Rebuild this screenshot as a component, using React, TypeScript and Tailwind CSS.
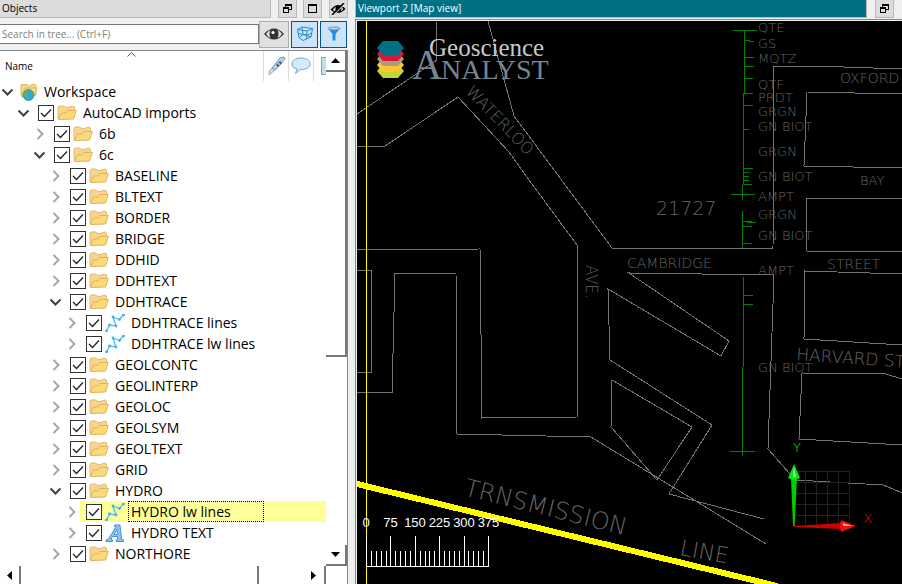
import { useState } from "react";
import type { ReactNode } from "react";

type Kind = "workspace" | "folder" | "lines" | "text";
type Node = { name: string; level: number; open?: boolean; kind: Kind; selected?: boolean };

const nodes: Node[] = [
  { name: "Workspace", level: 0, open: true, kind: "workspace" },
  { name: "AutoCAD imports", level: 1, open: true, kind: "folder" },
  { name: "6b", level: 2, kind: "folder" },
  { name: "6c", level: 2, open: true, kind: "folder" },
  { name: "BASELINE", level: 3, kind: "folder" },
  { name: "BLTEXT", level: 3, kind: "folder" },
  { name: "BORDER", level: 3, kind: "folder" },
  { name: "BRIDGE", level: 3, kind: "folder" },
  { name: "DDHID", level: 3, kind: "folder" },
  { name: "DDHTEXT", level: 3, kind: "folder" },
  { name: "DDHTRACE", level: 3, open: true, kind: "folder" },
  { name: "DDHTRACE lines", level: 4, kind: "lines" },
  { name: "DDHTRACE lw lines", level: 4, kind: "lines" },
  { name: "GEOLCONTC", level: 3, kind: "folder" },
  { name: "GEOLINTERP", level: 3, kind: "folder" },
  { name: "GEOLOC", level: 3, kind: "folder" },
  { name: "GEOLSYM", level: 3, kind: "folder" },
  { name: "GEOLTEXT", level: 3, kind: "folder" },
  { name: "GRID", level: 3, kind: "folder" },
  { name: "HYDRO", level: 3, open: true, kind: "folder" },
  { name: "HYDRO lw lines", level: 4, kind: "lines", selected: true },
  { name: "HYDRO TEXT", level: 4, kind: "text" },
  { name: "NORTHORE", level: 3, kind: "folder" },
];

const indents = ["pl-0", "pl-4", "pl-8", "pl-12", "pl-16"];

function FolderShape() {
  return (
    <>
      <path d="M1 15V3L2 2H7L8.500 3.500H11L16 2L17.500 3V6" fill="#f7d590" stroke="#e3ba6c" strokeWidth="1" />
      <path d="M1.500 15.500L4.500 9H9L10.500 6.500H19.300L16.500 15Z" fill="#fcda78" stroke="#e0b25c" strokeWidth="1" />
    </>
  );
}

function NodeIcon({ kind }: { kind: Kind }) {
  if (kind === "workspace")
    return (
      <svg className="h-[18px] w-[18px] shrink-0" viewBox="0 0 18 18" aria-hidden="true">
        <path d="M1 12V1.500H7L8.500 3L14 1L16 2.500V12L12 14H2Z" fill="#f7d58e" stroke="#e3b765" />
        <path d="M2 12L5 5H17L14 13Z" fill="#fbdc8c" stroke="#e3b765" />
        <circle cx="8.500" cy="12" r="5.500" fill="#35a2e8" />
        <path d="M5 8.500C7 5.500 9 6.500 9 8S6.500 9.500 7 11S9.500 12.500 8 14.500S5.500 13.500 4 12.500ZM11 8.500C13 9.500 13.500 10.500 13 12.500L11 13.500Z" fill="#54c03b" />
        <circle cx="8.500" cy="12" r="5.500" fill="none" stroke="#3b86c8" strokeWidth=".8" />
      </svg>
    );
  return (
    <svg className="h-[18px] w-5 shrink-0" viewBox="0 0 20 18" aria-hidden="true">
      {kind === "folder" && <FolderShape />}
      {kind === "lines" && (
        <g fill="#3fb2ea">
          <path d="M1.500 17L4.500 11L11 12L8 3L14.500 5.500L18.500 0.500" fill="none" stroke="#4fbcf0" strokeWidth="1.300" />
          {[[1.5, 17], [4.5, 11], [11, 12], [8, 3], [14.5, 5.5], [18.5, 1]].map(([x, y]) => (
            <circle key={`${x}-${y}`} cx={x} cy={y} r="1.400" />
          ))}
        </g>
      )}
      {kind === "text" && (
        <path
          d="M9.500 1H15L16.500 15L18.500 16V17.500H11V16L12.500 15.500V12.500H7.500L6 15.500L7.500 16V17.500H1V16L3 15.500L11 3L9.500 2.500ZM12 5.500L9 10.500H12.500Z"
          fillRule="evenodd"
          fill="#86c2f3"
          stroke="#4f93cd"
        />
      )}
    </svg>
  );
}

function TreeRow({ node }: { node: Node }) {
  const [checked, setChecked] = useState(true);
  const id = `node-${node.name.replace(/ /g, "-")}`;
  return (
    <li role="treeitem" aria-expanded={!!node.open} aria-selected={!!node.selected} className={`flex h-[21px] ${indents[node.level]}`}>
      <button type="button" aria-label={`Toggle ${node.name}`} className="grid w-4 shrink-0 place-items-center">
        <svg className="h-4 w-4" viewBox="0 0 16 16" fill="none" strokeWidth="2" aria-hidden="true">
          {node.open ? <path d="M2.500 5.500L7.500 10.500L12.500 5.500" stroke="#404040" /> : <path d="M5.500 3L10.500 8L5.500 13" stroke="#a6a6a6" />}
        </svg>
      </button>
      <div className={`flex min-w-0 flex-1 items-center ${node.selected ? "bg-[#ffff99]" : ""} ${node.level ? "pl-1.5" : "pl-1"}`}>
        {node.level > 0 && (
          <span className="mr-[3px] grid h-4 w-4 shrink-0">
            <input
              id={id}
              type="checkbox"
              checked={checked}
              onChange={() => setChecked(!checked)}
              className="col-start-1 row-start-1 m-0 h-4 w-4 appearance-none border border-[#333] bg-white"
            />
            {checked && (
              <svg className="pointer-events-none col-start-1 row-start-1 h-4 w-4" viewBox="0 0 16 16" aria-hidden="true">
                <path d="M3 8L6.500 11.500L13 4.500" fill="none" stroke="#222" strokeWidth="1.300" />
              </svg>
            )}
          </span>
        )}
        <NodeIcon kind={node.kind} />
        <label
          htmlFor={node.level ? id : undefined}
          className={`ml-[3px] flex h-[21px] items-center border pl-0.5 text-[14px] leading-5 whitespace-nowrap text-black ${
            node.selected ? "w-[136px] border-dotted border-black" : "border-transparent"
          }`}
        >
          {node.name}
        </label>
      </div>
    </li>
  );
}

function TitleButton({ label, children }: { label: string; children: ReactNode }) {
  return (
    <button type="button" aria-label={label} className="grid h-[18px] w-[19px] shrink-0 place-items-center border border-t-0 border-[#b9b9b9] bg-[#dcdcdc]">
      {children}
    </button>
  );
}

function RestoreIcon() {
  return (
    <svg className="h-[9px] w-[9px]" viewBox="0 0 9 9" shapeRendering="crispEdges" aria-hidden="true">
      <path d="M2 0H9V6H6V9H0V3H2ZM3 2V3H6V5H8V2ZM1 5V8H5V5Z" fillRule="evenodd" />
    </svg>
  );
}

function EyeShape() {
  return (
    <>
      <path d="M0 8Q10 -3 20 8Q10 19 0 8Z" fill="#333" />
      <path d="M2 8Q4 5 6.500 4Q4.500 8 6.500 12Q4 11 2 8ZM18 8Q16 5 13.500 4Q15.500 8 13.500 12Q16 11 18 8Z" fill="#e1e1e1" />
      <circle cx="9" cy="6.500" r="1.600" fill="#fff" />
    </>
  );
}

function ObjectsPanel() {
  return (
    <aside className="flex w-[348px] shrink-0 flex-col">
      <header className="flex h-[18px] shrink-0 justify-between">
        <h2 className="w-[271px] border-r border-b border-[#b9b9b9] bg-[#dcdcdc] pl-0.5 text-[10px] leading-[17px] text-black">Objects</h2>
        <TitleButton label="Restore"><RestoreIcon /></TitleButton>
        <TitleButton label="Maximize">
          <span className="h-[9px] w-[9px] border border-t-2 border-black" />
        </TitleButton>
        <TitleButton label="Hide">
          <svg className="h-3 w-4" viewBox="0 0 20 16" aria-hidden="true">
            <path d="M0 9Q10 -3 20 8Q10 18 0 9Z" />
            <path d="M3 9Q5 6 7 5Q6 8 7 11Q5 11 3 9ZM17 8Q16 6 14 5Q15 8 14 11Q16 10 17 8Z" fill="#dcdcdc" />
            <path d="M4 16L19 1" stroke="#dcdcdc" strokeWidth="1.500" />
            <path d="M2 16L18 0" stroke="#000" strokeWidth="2" />
          </svg>
        </TitleButton>
      </header>
      <div className="flex h-8 shrink-0 items-center gap-0.5 pr-px">
        <input
          type="text"
          aria-label="Search in tree"
          placeholder="Search in tree... (Ctrl+F)"
          className="h-5 min-w-0 flex-1 border border-l-0 border-[#777] bg-white pl-0.5 text-[10px] text-black placeholder:text-[#808080]"
        />
        <button type="button" aria-label="Show visible objects" className="-ml-0.5 grid h-[27px] w-[30px] place-items-center border border-[#adadad] bg-[#e1e1e1]">
          <svg className="h-4 w-5" viewBox="0 0 20 16" aria-hidden="true"><EyeShape /></svg>
        </button>
        <button type="button" aria-label="Box filter" className="grid h-[27px] w-[27px] place-items-center border border-[#00559b] bg-[#cce4f7]">
          <svg className="h-[18px] w-[18px]" viewBox="0 0 18 18" fill="none" stroke="#2791c4" aria-hidden="true">
            <path d="M1.500 4.500L6 2L16.500 3.500L15 12L7 15.500L3 12.500ZM1.500 4.500L11 6L16.500 3.500M11 6L10.500 14M6 2L7 9.500L3 12.500M7 9.500L15 12M2 8.500L11 10L16 8" />
          </svg>
        </button>
        <button type="button" aria-label="Filter" className="grid h-[27px] w-[27px] place-items-center border border-[#00559b] bg-[#cce4f7]">
          <svg className="h-4 w-4" viewBox="0 0 16 16" aria-hidden="true">
            <path d="M2 2.500L6.500 8V14.500H9.500V8L14 2.500Z" fill="#1b90ee" />
            <ellipse cx="8" cy="2.500" rx="6" ry="1.500" fill="#c8d2dc" stroke="#5d83a5" strokeWidth=".8" />
          </svg>
        </button>
      </div>
      <div className="flex min-h-0 flex-1 flex-col border-t border-r border-[#828790] bg-white">
        <div className="flex min-h-0 flex-1">
          <div className="flex min-w-0 flex-1 flex-col overflow-hidden">
            <div className="flex h-[30px] shrink-0 text-black">
              <div className="grid min-w-0 flex-1 grid-cols-1">
                <svg className="col-start-1 row-start-1 mt-px h-[5px] w-[9px] justify-self-center" viewBox="0 0 9 5" fill="none" stroke="#555" aria-hidden="true">
                  <path d="M.5 4.500L4.500 .5L8.500 4.500" />
                </svg>
                <span className="col-start-1 row-start-1 self-center pl-[5px] text-[10px] leading-4">Name</span>
              </div>
              <span className="grid w-[25px] place-items-center border-l border-[#dcdcdc]">
                <svg className="h-5 w-5" viewBox="0 0 20 20" aria-hidden="true">
                  <path d="M3 19V15L6 12L9 14Z" fill="#ddd" stroke="#aaa" />
                  <path d="M6 12L14 2L18 1L19 3L9 14.500Z" fill="#a9d2f3" stroke="#6c97b8" />
                  <path d="M10 9L14 5L16 7L12 11Z" fill="#556" />
                  <circle cx="13" cy="8" r="1" fill="#ddd" />
                </svg>
              </span>
              <span className="grid w-[25px] place-items-center border-l border-[#dcdcdc]">
                <svg className="h-5 w-5" viewBox="0 0 20 20" aria-hidden="true">
                  <path d="M10 2C15 2 19 4 19 8S15 13.500 9.500 13.500L4.500 17.500L6 13C3 12.500 1 11 1 8C1 4 5 2 10 2Z" fill="#d4ebfc" stroke="#72a9cc" />
                </svg>
              </span>
              <span className="flex w-[13px] items-center border-l border-[#dcdcdc] pl-[7px]">
                <span className="h-[18px] w-[5px] border border-r-0 border-[#79a8bc] bg-[#bfe0ec]" />
              </span>
            </div>
            <ul role="tree" aria-label="Objects" className="min-h-0 flex-1 overflow-hidden">
              {nodes.map((n) => <TreeRow key={n.name} node={n} />)}
            </ul>
          </div>
          <div className="flex w-[21px] shrink-0 flex-col">
            <button type="button" aria-label="Scroll up" className="grid h-[21px] shrink-0 place-items-center border-r-2 border-b-2 border-[#777]">
              <svg className="h-[5px] w-[9px]" viewBox="0 0 9 5" aria-hidden="true"><path d="M0 5L4.500 0L9 5Z" /></svg>
            </button>
            <div className="flex-[3] border-r-2 border-b-2 border-[#777]" />
            <div className="flex-[2]" />
            <button type="button" aria-label="Scroll down" className="grid h-[21px] shrink-0 place-items-center border-r-2 border-b-2 border-[#777]">
              <svg className="h-[5px] w-[9px]" viewBox="0 0 9 5" aria-hidden="true"><path d="M0 0L4.500 5L9 0Z" /></svg>
            </button>
          </div>
        </div>
        <div className="flex h-[18px] shrink-0">
          <button type="button" aria-label="Scroll left" className="grid w-[21px] place-items-center border-r-2 border-[#777]">
            <svg className="h-[9px] w-[5px]" viewBox="0 0 5 9" aria-hidden="true"><path d="M5 0L0 4.500L5 9Z" /></svg>
          </button>
          <div className="flex-1 border-r-2 border-[#777]" />
          <button type="button" aria-label="Scroll right" className="flex w-[67px] items-center justify-end border-r-2 border-[#777] pr-2">
            <svg className="h-[9px] w-[5px]" viewBox="0 0 5 9" aria-hidden="true"><path d="M0 0L5 4.500L0 9Z" /></svg>
          </button>
          <div className="w-[21px]" />
        </div>
      </div>
    </aside>
  );
}

const streets = [
  "436,21 437,60 357,114",
  "488,21 514,116 612,248 773,248 774,66 815,66 902,69",
  "357,146 385,146 458,97 509,152 529,180 577,245 577,417 482,418 480,249 357,250",
  "357,270 371,270 371,372 357,372",
  "357,392 392,393 395,273 456,273 457,434 591,437 766,544",
  "774,275 629,273 729,341 721,356 608,289 610,360 712,425 669,494 764,519",
  "774,275 768,449 790,474 795,480 883,485 893,489 902,493",
  "612,380 692,427 657,480 611,427 612,380",
  "902,94 807,92 804,166 902,168",
  "902,198 806,198 806,251 902,252",
  "902,274 805,271 804,339 902,345",
  "902,379 886,374 802,373 799,439 902,445",
];

const holes: [string, number][] = [
  ["QTE", 32], ["GS", 48], ["MQTZ", 63], ["QTF", 89], ["PRDT", 102], ["GRGN", 116], ["GN BIOT", 131],
  ["GRGN", 156], ["GN BIOT", 181], ["AMPT", 201], ["GRGN", 219], ["GN BIOT", 240], ["AMPT", 275], ["GN BIOT", 372],
];

const roads: { t: string; x: number; y: number; a: number; s: string }[] = [
  { t: "OXFORD", x: 840, y: 83, a: 0, s: "text-[14px]" },
  { t: "BAY", x: 860, y: 185, a: 0, s: "text-[13px]" },
  { t: "CAMBRIDGE", x: 627, y: 268, a: 0, s: "text-[14px]" },
  { t: "STREET", x: 827, y: 269, a: 0, s: "text-[14px]" },
  { t: "HARVARD ST", x: 796, y: 360, a: 4, s: "text-[17px]" },
  { t: "21727", x: 656, y: 215, a: 0, s: "text-[19px]" },
  { t: "AVE.", x: 586, y: 265, a: 90, s: "text-[15px]" },
  { t: "WATERLOO", x: 465, y: 92, a: 46, s: "text-[16px]" },
  { t: "TRNSMISSION", x: 463, y: 495, a: 14, s: "text-[24px]" },
  { t: "LINE", x: 679, y: 555, a: 10, s: "text-[22px]" },
];

const hexagon = "377,48 383,41 398,41 404,48 398,55 383,55";

function MapView() {
  return (
    <svg className="block h-full w-full bg-black" role="img" aria-label="Map view">
      <g transform="translate(-357 -21)">
        <g fill="none" stroke="#747474" shapeRendering="crispEdges">
          {streets.map((p) => <polyline key={p} points={p} />)}
        </g>
        <path
          fill="none"
          stroke="#008000"
          shapeRendering="crispEdges"
          d="M733 30.500H757M744.500 30V93.500M743.500 93V185M742.500 185V200M744 40.500H750M749 41.500H754M744 57.500H754M744 66.500H754M744 78.500H753M743 93.500H753M743 105.500H753M743 129.500H749M743 168.500H753M743 172.500H749M743 176.500H749M743 180.500H749M743 184.500H752M731 194.500H755M742.500 211V248M742 221.500H752M747 222.500H756M742 226.500H752M742 243.500H752M743.500 277V367M742.500 367V456M743 295.500H753M743 304.500H753M730 451.500H755"
        />
        <g fill="#666" className="font-['DejaVu_Sans_Light','DejaVu_Sans',sans-serif] font-extralight">
          {holes.map(([t, y]) => <text key={y} x="758" y={y} className="text-[13px]">{t}</text>)}
          {roads.map((r) => (
            <text key={r.t} transform={`translate(${r.x} ${r.y}) rotate(${r.a})`} className={r.s}>{r.t}</text>
          ))}
        </g>
        <path d="M355 483.500L777 586" stroke="#ff0" strokeWidth="6" shapeRendering="crispEdges" />
        <path d="M366.500 21V584" stroke="#ff0" shapeRendering="crispEdges" />
        {["#bfd73b", "#ffc62f", "#b09b78", "#d01a42", "#007183"].map((c, i) => (
          <polygon key={c} points={hexagon} fill={c} transform={`translate(0 ${[23, 17, 11, 6, 0][i]})`} />
        ))}
        <g className="font-['Liberation_Serif',serif]">
          <text x="412" y="79" fill="#768592" className="text-[42px]">A</text>
          <text x="441" y="79" fill="#768592" className="text-[28px]">NALYST</text>
          <text x="429" y="56" fill="#c3cacf" className="text-[25px]">Geoscience</text>
        </g>
        <g stroke="#fff" shapeRendering="crispEdges">
          <path d="M366 566.500H489" />
          {Array.from({ length: 26 }, (_, i) => {
            const x = Math.round(366 + i * 4.88) + 0.5;
            return <path key={i} d={`M${x} ${i % 5 ? 551 : 536}V566`} />;
          })}
        </g>
        <g fill="#fff" textAnchor="middle" className="font-['Liberation_Sans',sans-serif] text-[13px]">
          {["0", "75", "150", "225", "300", "375"].map((t, i) => (
            <text key={t} x={366 + i * 24.5} y="527">{t}</text>
          ))}
        </g>
        <g stroke="#222" fill="none" shapeRendering="crispEdges">
          {[0, 11, 22, 33, 44, 55].map((d) => (
            <path key={d} d={`M${794.5 + d} 471V526M794 ${471.5 + d}H849`} />
          ))}
        </g>
        <path d="M793 526L791 478H797L794.500 526Z" fill="#0c0" />
        <path d="M788 478L794 464L800 478Q794 481 788 478Z" fill="#00e618" />
        <path d="M793 477L794 467L796 477Z" fill="#9f9" />
        <path d="M794 526L841 523V529L794 527Z" fill="#c00" />
        <path d="M841 520L856 526L841 532Q839 526 841 520Z" fill="#f01010" />
        <path d="M843 523L852 526H843Z" fill="#f99" />
        <g textAnchor="middle" className="font-['DejaVu_Sans_Light','DejaVu_Sans',sans-serif] text-[13px] font-extralight">
          <text x="797" y="452" fill="#0f0">Y</text>
          <text x="868" y="523" fill="#f00">X</text>
        </g>
      </g>
    </svg>
  );
}

export default function App() {
  return (
    <div className="flex h-screen w-full overflow-hidden bg-[#f0f0f0] font-['Open_Sans','Noto_Sans',sans-serif]">
      <ObjectsPanel />
      <main className="ml-[7px] flex min-w-0 flex-1 flex-col">
        <header className="flex h-[18px] shrink-0 gap-2">
          <h2 className="min-w-0 flex-1 border border-t-0 border-[#b9b9b9] bg-[#007183] pl-0.5 text-[10px] leading-[17px] text-white">Viewport 2 [Map view]</h2>
          <TitleButton label="Restore viewport"><RestoreIcon /></TitleButton>
          <span className="-mr-px w-px border-l border-[#b9b9b9]" />
        </header>
        <div className="mt-px min-h-0 flex-1 border-t border-l border-[#828790] pt-px pl-px">
          <MapView />
        </div>
      </main>
    </div>
  );
}
